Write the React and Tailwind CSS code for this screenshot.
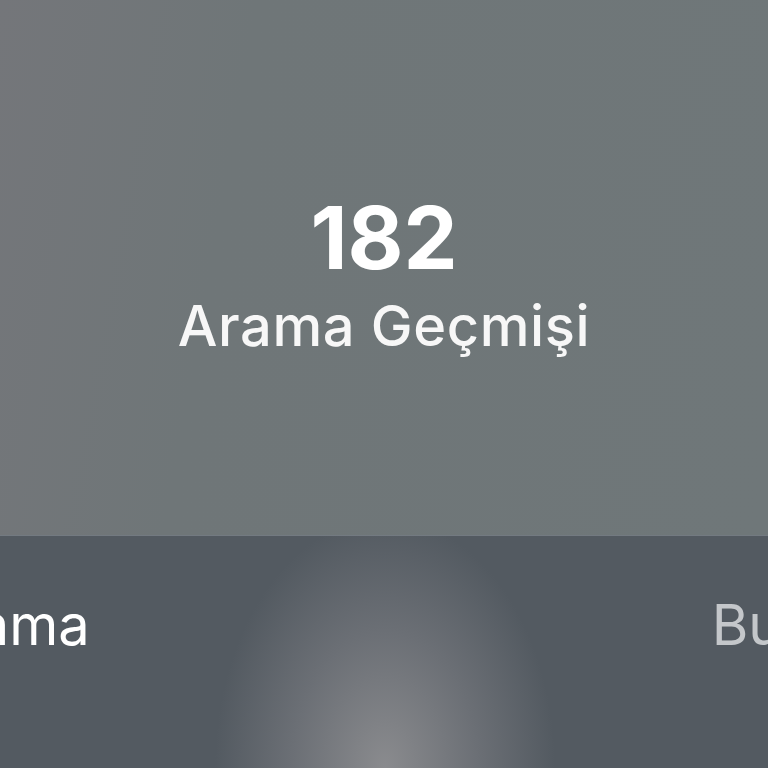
export default function App() {
  return (
    <div
      className="w-[768px] h-[768px] overflow-hidden flex flex-col"
      style={{ fontFamily: 'Inter, "Noto Sans", sans-serif' }}
    >
      <div className="h-[535px] shrink-0 flex flex-col items-center pt-[195px] bg-[#6f7678] bg-[linear-gradient(100deg,#74767a_0%,#6f7678_30%,#6f7779_100%)]">
        <div className="text-[86px] leading-none font-bold text-white tracking-[0px]">182</div>
        <div className="mt-[17px] text-[56px] leading-none font-medium text-[#f7f7f7] tracking-[0.6px]">
          Arama Geçmişi
        </div>
      </div>
      <div className="flex-1 overflow-hidden flex justify-between items-start border-t border-[#737a81] bg-[#535a61] bg-[radial-gradient(ellipse_170px_250px_at_385px_100%,#8a8b8e_0%,#6b6f75_55%,transparent_100%)]">
        <div className="mt-[61px] ml-[-82px] text-[56px] leading-none font-normal text-white">Arama</div>
        <div className="mt-[61px] mr-[-114px] text-[56px] leading-none font-normal text-[#c4c7ca]">Bugün</div>
      </div>
    </div>
  );
}
